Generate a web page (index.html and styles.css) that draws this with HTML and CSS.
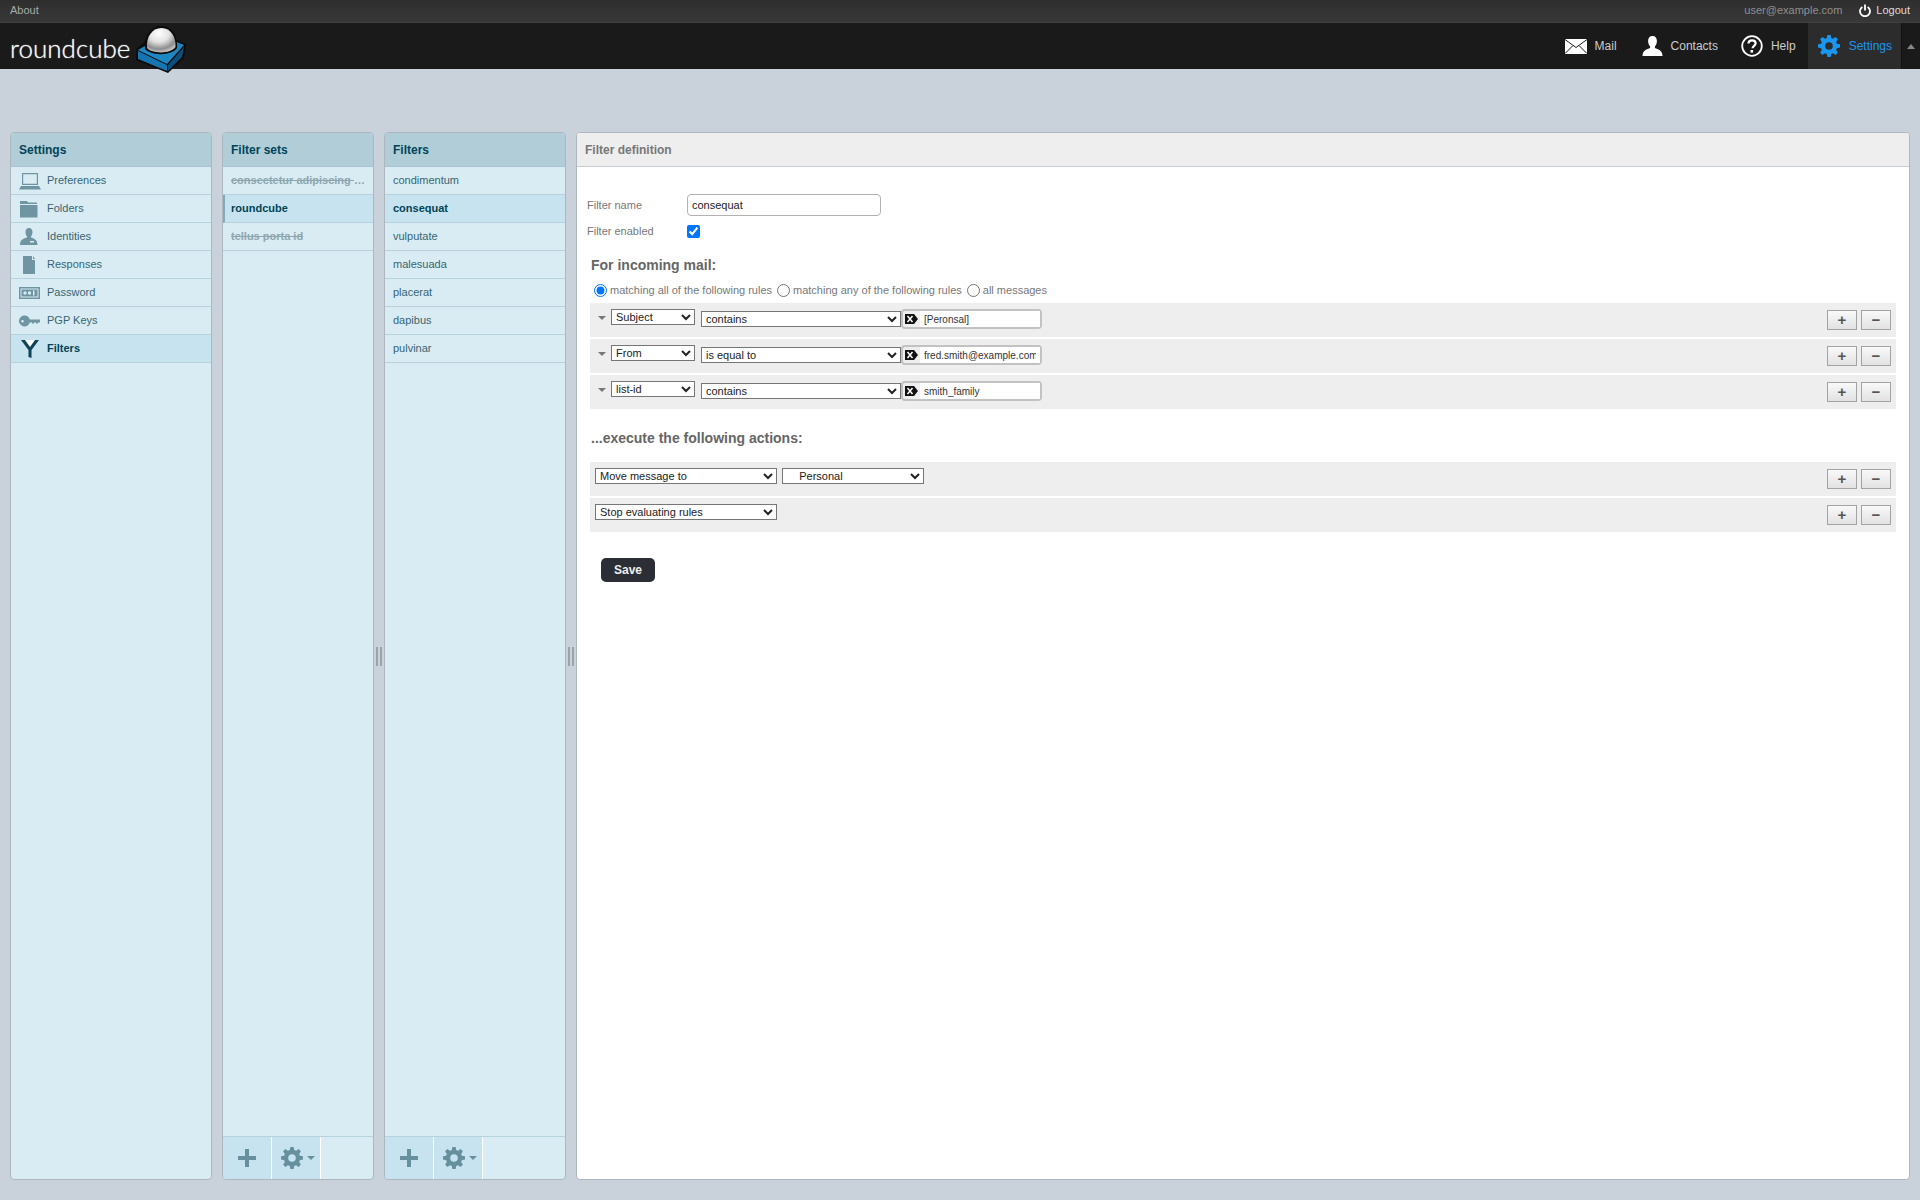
FILE: index.html
```html
<!DOCTYPE html>
<html lang="en">
<head>
    <meta charset="UTF-8">
    <title>Roundcube Webmail :: Filters</title>
    <link rel="stylesheet" href="styles.css">
</head>
<body>
    <svg class="defs" width="0" height="0">
        <defs>
            <radialGradient id="dome" cx="42%" cy="22%" r="80%">
                <stop offset="0" stop-color="#fff"/>
                <stop offset=".45" stop-color="#e2e2e2"/>
                <stop offset=".8" stop-color="#8e8e8e"/>
                <stop offset="1" stop-color="#c8c8c8"/>
            </radialGradient>
            <g id="gear">
                <path d="M10.200 0h3.600l.6 3.300 2 .8 2.800-1.900 2.500 2.500-1.900 2.800.8 2 3.400.7v3.500l-3.400.7-.8 2 1.900 2.800-2.500 2.500-2.800-1.900-2 .8-.6 3.300h-3.600l-.6-3.300-2-.8-2.800 1.900-2.500-2.500 1.900-2.800-.8-2-3.400-.7v-3.500l3.400-.7.8-2-1.900-2.800 2.500-2.500 2.800 1.900 2-.8zM12 8a4.100 4.100 0 1 0 0 8.200A4.100 4.100 0 0 0 12 8z" fill-rule="evenodd"/>
            </g>
            <g id="tagx">
                <path d="M0 1h9l4 5-4 5H0z" fill="#111"/>
                <path d="M2.500 3l5 6M7.500 3l-5 6" stroke="#fff" stroke-width="1.500"/>
            </g>
        </defs>
    </svg>

    <div class="topbar">
        <a class="topbar-link">About</a>
        <div class="topbar-right">
            <span class="username">user@example.com</span>
            <a class="logout">
                <svg width="12" height="13" viewBox="0 0 12 13"><path d="M3.400 3a5 5 0 1 0 5.200 0" fill="none" stroke="#fff" stroke-width="1.800"/><path d="M6 .5v6" stroke="#fff" stroke-width="1.800"/></svg>
                Logout
            </a>
        </div>
    </div>

    <header class="header">
        <div class="logo">
            <span class="logo-text">roundcube</span>
            <svg class="logo-cube" width="50" height="48" viewBox="0 0 50 48">
                <path d="M0 23L12 13H38L50 18 48 32 32 47 0 34z" fill="#0b0b0b"/>
                <path d="M2 24L26 10 48 19 31 38z" fill="#1f86c4"/>
                <path d="M2 25L31 39V45L2 33z" fill="#1675b0"/>
                <path d="M32 39L48 21 46 31 32 45z" fill="#0c4f7c"/>
                <path d="M9 23C8 10 15 0 25.500 0S42 10 41 22C36 30 15 30 9 23z" fill="#0b0b0b"/>
                <path d="M11 22C10 11 16 2 25.500 2S40 11 39.500 21C35 28 16 28 11 22z" fill="url(#dome)"/>
            </svg>
        </div>
        <nav class="nav">
            <a class="nav-item">
                <svg width="22" height="15" viewBox="0 0 22 15"><rect width="22" height="15" fill="#fff"/><path d="M0 .5l11 8 11-8M0 14.500l8-8M22 14.500l-8-8" fill="none" stroke="#1a1a1a" stroke-width="1"/></svg>
                Mail
            </a>
            <a class="nav-item">
                <svg width="21" height="20" viewBox="0 0 20 20"><path d="M10 0c3 0 4.400 2 4.400 5 0 2.400-1 4.500-2 5.500v1.500c3 1.500 7.600 2 7.600 8H0c0-6 4.600-6.500 7.600-8v-1.500c-1-1-2-3.100-2-5.500 0-3 1.400-5 4.400-5z" fill="#fff"/></svg>
                Contacts
            </a>
            <a class="nav-item nav-item-help">
                <svg width="22" height="22" viewBox="0 0 22 22"><circle cx="11" cy="11" r="9.800" fill="none" stroke="#fff" stroke-width="1.800"/><path d="M7.500 8.500c0-2 1.500-3.200 3.600-3.200s3.500 1.200 3.500 3c0 2.500-3 2.500-3 5" fill="none" stroke="#fff" stroke-width="2.200"/><rect x="9.500" y="15" width="2.600" height="2.600" fill="#fff"/></svg>
                Help
            </a>
            <a class="nav-item nav-item-active">
                <svg class="icon-blue" width="22" height="22" viewBox="0 0 24 24"><use href="#gear"/></svg>
                Settings
            </a>
        </nav>
        <div class="toggler"><span class="toggler-arrow"></span></div>
    </header>

    <main class="main">
        <section class="panel panel-settings">
            <h2 class="panel-title">Settings</h2>
            <ul class="list">
                <li class="row row-icon">
                    <svg class="row-svg" width="22" height="18" viewBox="0 0 22 18"><path d="M3 1h16v12H3zM4.200 2.200v9.600h13.600V2.200zM2 14h18l2 3.500H0z" fill-rule="evenodd"/></svg>
                    Preferences
                </li>
                <li class="row row-icon">
                    <svg class="row-svg" width="22" height="18" viewBox="0 0 22 18"><path d="M1 1h7l1 1.500h9V4H1zM1 5h17.500v12.500H1z"/></svg>
                    Folders
                </li>
                <li class="row row-icon">
                    <svg class="row-svg" width="22" height="18" viewBox="0 0 22 18"><path d="M10 0c2.500 0 3.500 1.800 3.500 4 0 2-.8 3.800-1.500 4.500v1c2.500 1 6.500 1.500 6.500 7.500H1c0-6 4-6.500 7-7.500v-1C7.300 7.800 6.500 6 6.500 4c0-2.200 1-4 3.500-4z"/><rect x="11" y="13" width="4" height="1.500" fill="#d9ecf4"/></svg>
                    Identities
                </li>
                <li class="row row-icon">
                    <svg class="row-svg" width="22" height="18" viewBox="0 0 22 18"><path d="M4 0h9v4h3v14H4zM14 0l2 3h-2z"/></svg>
                    Responses
                </li>
                <li class="row row-icon">
                    <svg class="row-svg" width="22" height="18" viewBox="0 0 22 14"><path d="M0 1h21v12H0zM1.500 2.500v9h18v-9z" fill-rule="evenodd"/><rect x="2.500" y="3.500" width="16" height="7"/><circle cx="6" cy="7" r="1.700" fill="#d9ecf4"/><circle cx="10.500" cy="7" r="1.700" fill="#d9ecf4"/><rect x="14" y="4.500" width="1.500" height="5" fill="#d9ecf4"/></svg>
                    Password
                </li>
                <li class="row row-icon">
                    <svg class="row-svg" width="22" height="18" viewBox="0 0 22 14"><path d="M5.500 1.500a5.500 5.500 0 0 1 5.300 4H21v3h-2v1h-2v-1h-2v1h-2v-1h-2.200a5.500 5.500 0 1 1-5.300-7zM3.500 6a1.300 1.300 0 1 0 0 2.600 1.300 1.300 0 0 0 0-2.600z" fill-rule="evenodd"/></svg>
                    PGP Keys
                </li>
                <li class="row row-icon row-selected">
                    <svg width="22" height="18" viewBox="0 0 22 18"><path d="M2 0h18L12.500 10v8l-3-1V10z" fill="#0d4354"/><path d="M6 0h10l-5 7z" fill="#fff"/></svg>
                    Filters
                </li>
            </ul>
        </section>

        <section class="panel panel-sets">
            <h2 class="panel-title">Filter sets</h2>
            <ul class="list">
                <li class="row row-disabled"><span class="row-clip">consectetur adipiscing elit</span></li>
                <li class="row row-selected row-marked">roundcube</li>
                <li class="row row-disabled">tellus porta id</li>
            </ul>
            <div class="panel-footer">
                <a class="foot-btn">
                    <svg width="18" height="18" viewBox="0 0 18 18"><path d="M7 0h4v7h7v4h-7v7H7v-7H0V7h7z"/></svg>
                </a>
                <a class="foot-btn foot-btn-menu">
                    <svg width="22" height="22" viewBox="0 0 24 24"><use href="#gear"/></svg>
                    <span class="foot-caret"></span>
                </a>
            </div>
        </section>

        <div class="splitter"><span class="grip"></span></div>

        <section class="panel panel-filters">
            <h2 class="panel-title">Filters</h2>
            <ul class="list">
                <li class="row">condimentum</li>
                <li class="row row-selected">consequat</li>
                <li class="row">vulputate</li>
                <li class="row">malesuada</li>
                <li class="row">placerat</li>
                <li class="row">dapibus</li>
                <li class="row">pulvinar</li>
            </ul>
            <div class="panel-footer">
                <a class="foot-btn">
                    <svg width="18" height="18" viewBox="0 0 18 18"><path d="M7 0h4v7h7v4h-7v7H7v-7H0V7h7z"/></svg>
                </a>
                <a class="foot-btn foot-btn-menu">
                    <svg width="22" height="22" viewBox="0 0 24 24"><use href="#gear"/></svg>
                    <span class="foot-caret"></span>
                </a>
            </div>
        </section>

        <div class="splitter"><span class="grip"></span></div>

        <section class="panel panel-content">
            <h2 class="panel-title panel-title-grey">Filter definition</h2>
            <form class="filter-form">
                <div class="field">
                    <label class="field-label">Filter name</label>
                    <input class="field-input" type="text" value="consequat">
                </div>
                <div class="field field-check">
                    <label class="field-label">Filter enabled</label>
                    <input class="field-checkbox" type="checkbox" checked>
                </div>

                <h3 class="section-title">For incoming mail:</h3>
                <div class="scope">
                    <label class="scope-item"><input type="radio" name="scope" checked>matching all of the following rules</label>
                    <label class="scope-item"><input type="radio" name="scope">matching any of the following rules</label>
                    <label class="scope-item"><input type="radio" name="scope">all messages</label>
                </div>

                <div class="rule">
                    <span class="rule-arrow"></span>
                    <select class="sel sel-header"><option>Subject</option></select>
                    <select class="sel sel-op"><option>contains</option></select>
                    <div class="target">
                        <svg width="13" height="12" viewBox="0 0 13 12"><use href="#tagx"/></svg>
                        <input class="target-input" type="text" value="[Peronsal]">
                    </div>
                    <div class="rule-btns">
                        <button class="pm" type="button">+</button>
                        <button class="pm" type="button">−</button>
                    </div>
                </div>
                <div class="rule">
                    <span class="rule-arrow"></span>
                    <select class="sel sel-header"><option>From</option></select>
                    <select class="sel sel-op"><option>is equal to</option></select>
                    <div class="target">
                        <svg width="13" height="12" viewBox="0 0 13 12"><use href="#tagx"/></svg>
                        <input class="target-input" type="text" value="fred.smith@example.com">
                    </div>
                    <div class="rule-btns">
                        <button class="pm" type="button">+</button>
                        <button class="pm" type="button">−</button>
                    </div>
                </div>
                <div class="rule">
                    <span class="rule-arrow"></span>
                    <select class="sel sel-header"><option>list-id</option></select>
                    <select class="sel sel-op"><option>contains</option></select>
                    <div class="target">
                        <svg width="13" height="12" viewBox="0 0 13 12"><use href="#tagx"/></svg>
                        <input class="target-input" type="text" value="smith_family">
                    </div>
                    <div class="rule-btns">
                        <button class="pm" type="button">+</button>
                        <button class="pm" type="button">−</button>
                    </div>
                </div>

                <h3 class="section-title section-title-actions">...execute the following actions:</h3>

                <div class="rule rule-action">
                    <select class="sel sel-action"><option>Move message to</option></select>
                    <select class="sel sel-folder"><option>&nbsp;&nbsp;&nbsp;&nbsp;Personal</option></select>
                    <div class="rule-btns">
                        <button class="pm" type="button">+</button>
                        <button class="pm" type="button">−</button>
                    </div>
                </div>
                <div class="rule rule-action">
                    <select class="sel sel-action"><option>Stop evaluating rules</option></select>
                    <div class="rule-btns">
                        <button class="pm" type="button">+</button>
                        <button class="pm" type="button">−</button>
                    </div>
                </div>

                <button class="save" type="button">Save</button>
            </form>
        </section>
    </main>
</body>
</html>
```

FILE: styles.css
```css
* {
    margin: 0;
    padding: 0;
    box-sizing: border-box;
}

body {
    height: 100vh;
    overflow: hidden;
    display: flex;
    flex-direction: column;
    background: #c9d1da;
    font-family: "Liberation Sans", Arial, sans-serif;
    font-size: 11px;
    color: #333;
}

.defs {
    position: absolute;
}

/* Top bar */
.topbar {
    height: 23px;
    flex: none;
    display: flex;
    align-items: center;
    justify-content: space-between;
    padding: 0 10px 2px;
    background: linear-gradient(#2e2e2e, #383838);
    border-bottom: 1px solid #3f3f3f;
}

.topbar-link {
    color: #aaa;
}

.topbar-right {
    display: flex;
    align-items: center;
}

.username {
    color: #8f8f8f;
    margin-right: 17px;
}

.logout {
    display: flex;
    align-items: center;
    gap: 5px;
    color: #ddd;
}

/* Header */
.header {
    height: 46px;
    flex: none;
    display: flex;
    align-items: stretch;
    background: #1a1a1a;
}

.logo {
    display: flex;
    align-items: center;
    margin-right: auto;
    padding-left: 10px;
}

.logo-text {
    font-family: Lato, "Open Sans", sans-serif;
    font-weight: 300;
    font-size: 26px;
    line-height: 46px;
    margin-top: 4px;
    color: #f4f4f4;
    text-shadow: 0 0 1px #eee;
    width: 126px;
}

.logo-cube {
    margin-top: 7px;
    overflow: visible;
}

.nav {
    display: flex;
    align-items: stretch;
}

.nav-item {
    display: flex;
    align-items: center;
    gap: 8px;
    padding: 0 13px 0 12px;
    font-size: 12px;
    color: #ccc;
}

.nav-item-help {
    padding: 0 12px 0 10px;
}

.nav-item-active {
    background: #2c2c2c;
    color: #1a96ee;
    gap: 9px;
    padding: 0 9px 0 10px;
}

.icon-blue {
    fill: #1a96ee;
}

.toggler {
    width: 19px;
    display: flex;
    align-items: center;
    justify-content: center;
    border-left: 1px solid #111;
}

.toggler-arrow {
    border: 4px solid transparent;
    border-top: 0;
    border-bottom: 5px solid #888;
}

/* Panels */
.main {
    flex: 1;
    min-height: 0;
    display: flex;
    padding: 63px 10px 20px 10px;
}

.panel {
    display: flex;
    flex-direction: column;
    background: #d9ecf4;
    border: 1px solid #aeb6c0;
    border-radius: 4px;
    overflow: hidden;
}

.panel-settings {
    width: 202px;
    margin-right: 10px;
}

.panel-sets {
    width: 152px;
}

.panel-filters {
    width: 182px;
}

.panel-content {
    flex: 1;
    background: #fff;
}

.panel-title {
    height: 34px;
    flex: none;
    padding-left: 8px;
    font-size: 12px;
    line-height: 34px;
    color: #004458;
    background: #b0cdd8;
    border-bottom: 1px solid #a6c3ce;
}

.panel-title-grey {
    color: #777;
    background: #eee;
    border-bottom-color: #c5ccd3;
}

.list {
    flex: 1;
    list-style: none;
}

.row {
    height: 28px;
    padding-left: 8px;
    line-height: 27px;
    color: #376572;
    border-bottom: 1px solid #b5d2dd;
}

.row-icon {
    display: flex;
    align-items: center;
    gap: 6px;
}

.row-svg {
    fill: #6f95a2;
}

.row-selected {
    background: #c7e3ef;
    color: #004458;
    font-weight: bold;
}

.row-marked {
    padding-left: 6px;
    border-left: 2px solid #85a9b6;
}

.row-disabled {
    color: #8ea7af;
    font-weight: bold;
    text-decoration: line-through;
}

.row-clip {
    display: block;
    width: 136px;
    overflow: hidden;
    white-space: nowrap;
    text-overflow: ellipsis;
}

.panel-footer {
    height: 43px;
    flex: none;
    display: flex;
    border-top: 1px solid #b5d2dd;
}

.foot-btn {
    width: 49px;
    display: flex;
    align-items: center;
    justify-content: center;
    gap: 4px;
    background: #c7e3ef;
    border-right: 1px solid #fff;
    fill: #66909e;
}

.foot-btn-menu {
    padding-left: 3px;
}

.foot-caret {
    border: 4px solid transparent;
    border-bottom: 0;
    border-top: 4px solid #66909e;
}

.splitter {
    width: 10px;
    flex: none;
    display: flex;
    align-items: center;
    justify-content: center;
}

.grip {
    width: 6px;
    height: 19px;
    border-left: 2px solid #9aa2aa;
    border-right: 2px solid #9aa2aa;
}

/* Filter form */
.filter-form {
    padding: 27px 13px 0 10px;
}

.field {
    display: flex;
    align-items: center;
    height: 22px;
}

.field-check {
    margin-top: 4px;
}

.field-label {
    width: 100px;
    margin-bottom: 1px;
    color: #777;
}

.field-input {
    width: 194px;
    height: 22px;
    padding: 0 4px;
    border: 1px solid #b2b2b2;
    border-radius: 4px;
    font: 11px "Liberation Sans", Arial, sans-serif;
    color: #222;
}

.field-checkbox {
    width: 13px;
    height: 13px;
}

.section-title {
    margin: 14px 0 0 4px;
    font-size: 14px;
    line-height: 18px;
    color: #666;
}

.section-title-actions {
    margin-top: 20px;
    margin-bottom: 15px;
}

.scope {
    display: flex;
    gap: 5px;
    margin: 8px 0 5px 7px;
    height: 16px;
    align-items: center;
    color: #777;
}

.scope-item {
    display: flex;
    align-items: center;
    gap: 3px;
}

.scope-item input {
    margin: 0;
    width: 13px;
    height: 13px;
}

.rule {
    height: 34px;
    margin: 0 0 2px 3px;
    padding: 6px 5px 0 8px;
    display: flex;
    align-items: flex-start;
    background: #eee;
}

.rule-action {
    padding-left: 5px;
    gap: 5px;
}

.rule-arrow {
    width: 0;
    margin: 7px 5px 0 0;
    border: 4px solid transparent;
    border-bottom: 0;
    border-top: 4px solid #777;
}

.sel {
    height: 16px;
    font: 11px "Liberation Sans", Arial, sans-serif;
    color: #222;
    background: #fff;
}

.sel-header {
    width: 84px;
}

.sel-op {
    width: 200px;
    margin: 2px 0 0 6px;
}

.sel-action {
    width: 182px;
}

.sel-folder {
    width: 142px;
}

.target {
    width: 141px;
    height: 20px;
    display: flex;
    align-items: center;
    padding-left: 2px;
    background: #eee;
    border: 2px solid #c2c2c2;
    border-radius: 4px;
}

.target-input {
    flex: 1;
    min-width: 0;
    height: 16px;
    margin-left: 2px;
    padding: 0 4px;
    border: 0;
    outline: 0;
    font: 10px "Liberation Sans", Arial, sans-serif;
    color: #333;
}

.rule-btns {
    display: flex;
    gap: 4px;
    margin-left: auto;
    margin-top: 1px;
}

.pm {
    width: 30px;
    height: 20px;
    border: 1px solid #a3a3a3;
    background: linear-gradient(#f9f9f9, #e2e2e2);
    font: bold 15px/16px "Liberation Sans", Arial, sans-serif;
    color: #555;
}

.save {
    display: block;
    width: 54px;
    height: 24px;
    margin: 26px 0 0 14px;
    border: 0;
    border-radius: 5px;
    background: #2b2e34;
    font: bold 12px "Liberation Sans", Arial, sans-serif;
    color: #eee;
}
```
